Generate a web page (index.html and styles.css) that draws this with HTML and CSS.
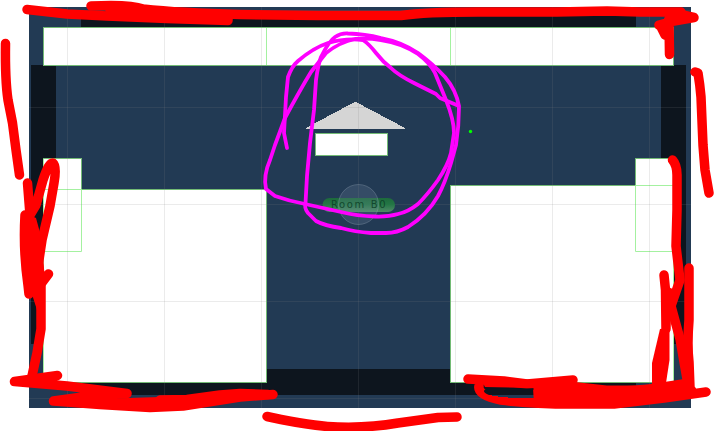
FILE: index.html
```html
<!DOCTYPE html>
<html lang="en">
<head>
<meta charset="utf-8">
<title>Room B0</title>
<link rel="stylesheet" href="styles.css">
</head>
<body>
<svg class="map" viewBox="0 0 714 431" width="714" height="431">
  <defs>
    <linearGradient id="pill" x1="0" y1="0" x2="0" y2="1">
      <stop offset="0" stop-color="#1d6a3c"/>
      <stop offset=".45" stop-color="#237645"/>
      <stop offset="1" stop-color="#4f8a67"/>
    </linearGradient>
  </defs>
  <rect class="floor" x="29" y="7" width="662" height="401"/>
  <g class="shade">
    <rect x="81" y="14" width="555" height="13"/>
    <rect x="31" y="65" width="25" height="279"/>
    <rect x="661" y="65" width="25" height="279"/>
    <rect x="81" y="369" width="555" height="26"/>
  </g>
  <g class="wall">
    <rect x="43.5" y="27.5" width="630" height="38"/>
    <rect x="43.5" y="158.5" width="38" height="93"/>
    <rect x="635.5" y="158.5" width="38" height="93"/>
    <rect x="43.5" y="189.5" width="223" height="193"/>
    <rect x="450.5" y="185.5" width="223" height="197"/>
    <rect x="315.5" y="133.5" width="72" height="22"/>
  </g>
  <path class="edge" d="M266.5 28V65M450.5 28V65M44 189.5H81.500V251.500H44M673 185.500H635.500V251.500H673M43.500 159V382M673.500 159V382"/>
  <path class="roof" d="M354.5 102H356L405 128V129H306V128Z"/>
  <path class="grid" d="M67.5 7V408M164.5 7V408M261.5 7V408M358.5 7V408M455.5 7V408M552.5 7V408M649.5 7V408M29 10.5H691M29 107.5H691M29 204.5H691M29 301.5H691M29 398.5H691"/>
  <rect class="pill" x="322.5" y="198" width="72.5" height="14" rx="7"/>
  <circle class="knob" cx="358.5" cy="204.5" r="20"/>
  <text class="label" x="331" y="208" textLength="54.5">Room B0</text>
  <circle class="dot" cx="470.5" cy="131.5" r="1.7"/>
  <g class="red">
    <path d="M27 9.500L67 14L107 16L167 18.500L228 20.500"/>
    <path d="M91 6Q130 4 143 9Q180 13 240 14.500L318 15.500L401 15.500Q425 12 478 12L557 12L607 11L640 12L681 12"/>
    <path d="M110 10L170 16L228 18"/>
    <path d="M678 14L694 17.500L674 21L659 25L667 24L671 14M661 27L665 35M669 22L669.500 54.500"/>
    <path d="M5.500 43.500Q5 80 8 100L12.500 123L16 150L19.500 175"/>
    <path d="M27.500 183L30 215L36 205L43 180Q49 162 53 163Q57 166 54 183L50 206L42 240L38.500 263L40 275M48.500 274L41 284"/>
    <path d="M25 215Q23 250 28 285L29 294"/>
    <path class="fill" d="M25 213L36 218L42 240L45 286L42 312L37 310L29 285Z"/>
    <path d="M41 286L41 329L37 353L32 376"/>
    <path d="M57.500 375.500L14.500 381.500L67 386L127 393.500L90 396L53.500 401L100 404.500L150 407.500L183 406Q215 401 240 397L273 394.500"/>
    <path d="M160 400L187 399.500L220 395L240 393.500L268 394.500"/>
    <path class="fill" d="M95 399L160 397L160 408L100 406Z"/>
    <path d="M267 416.500L281 419.500Q320 427 338 427Q370 428 398 423L438 417.500L457 417"/>
    <path d="M695 72L698 73Q700 85 701 97L703 145L705 170L709 193"/>
    <path d="M672.500 160Q677 165 677 175L677 210L676 246L680 280L671 306L680 339L687 379"/>
    <path d="M689 268L689 320Q687 345 689 362L690 388"/>
    <path d="M664 275L665.500 290L666 329"/>
    <path class="fill" d="M666 286L675 290L671 316L670 328L662 328Z"/>
    <path class="fill" d="M660 329L669.500 328L669.500 360L666 383L664 388L652 386L652 363Z"/>
    <path d="M468 379L504 381L527 384L573 380M479 386Q477 395 501 400Q530 404 574 404L614 404L664 398L706 392"/>
    <path class="fill" d="M480 377L575 382L607 385.500Q635 386 651 384L684 379L696 388L695 395L664 402L614 405L534 404L533 388L485 387Z"/>
  </g>
  <path class="slot" d="M487 388.500H534L532 392L533 395H489Q480 391 487 388.500Z"/>
  <path class="floor" d="M489 395H533V398Q510 399 489 395Z"/>
  <g class="magenta">
    <path d="M287 148L284 133L286 97L288 77Q292 66 298 61Q313 48 328 43Q345 38 363 40Q369 44 376 53Q383 62 391 68Q398 75 414 83L436 94L440 98L459 106Q459 126 456 145L451 163Q445 183 438 196Q427 215 408 227Q397 233 386 233L371 233Q355 232 341 228Q325 226 316 221L308 213Q304 208 305.500 203L307 176L310 143L314 110L316 80Q318 65 321 57Q329 41 335 37Q341 33 348 33.500Q365 34 381 38Q402 42 418 53Q433 64 445 77Q456 90 459 106"/>
    <path d="M275 145L285 118Q300 90 311 72L326 53Q340 42 355 39Q368 38 381 40Q402 43 418 54Q430 63 435 73L446 100Q454 120 454 133L451 153Q448 165 438 180Q428 194 418 204Q408 212 398 214Q388 217 375 216.500Q357 216 341 212L305 204Q289 201 275 196L266 189Q263 176 270 160Z"/>
  </g>
</svg>
</body>
</html>
```
FILE: styles.css
```css
body { margin: 0; background: #fff; overflow: hidden; }
.map { display: block; }
.floor { fill: #223a54; }
.shade, .slot { fill: #0d151e; }
.floor, .shade { shape-rendering: crispEdges; }
.wall { fill: #fff; stroke: #73bb75; stroke-width: 1; }
.edge { fill: none; stroke: #a4f1a0; stroke-width: 1; }
.roof { fill: #d5d5d5; shape-rendering: crispEdges; }
.grid { fill: none; stroke: #808080; stroke-opacity: .16; stroke-width: 1; }
.pill { fill: url(#pill); }
.knob { fill: #8298b0; fill-opacity: .2; stroke: #9aabbb; stroke-opacity: .4; stroke-width: .8; }
.label { font: 10px "DejaVu Sans", sans-serif; fill: #0c3d25; fill-opacity: .85; }
.dot { fill: #00ff00; }
.red { fill: none; stroke: #f00; stroke-width: 9.5; stroke-linecap: round; stroke-linejoin: round; }
.red .fill { fill: #f00; stroke: none; }
.magenta { fill: none; stroke: #f0f; stroke-width: 3.8; stroke-linecap: round; stroke-linejoin: round; }
```
